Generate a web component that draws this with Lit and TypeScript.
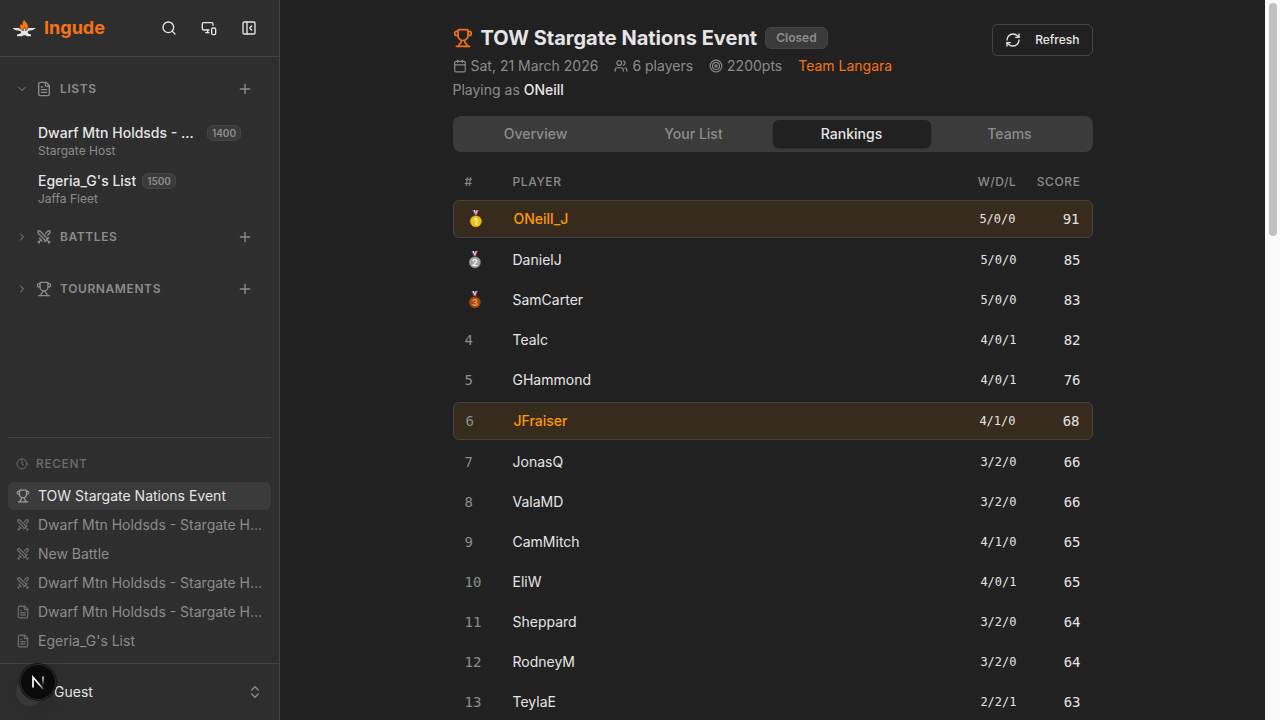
import { LitElement, html, css, svg, nothing } from "lit";
import { customElement, property, state } from "lit/decorators.js";
import { classMap } from "lit/directives/class-map.js";

const ICONS = {
  search: svg`<path d="m21 21-4.34-4.34"/><circle cx="11" cy="11" r="8"/>`,
  devices: svg`<path d="M18 8V6a2 2 0 0 0-2-2H4a2 2 0 0 0-2 2v7a2 2 0 0 0 2 2h8"/><path d="M10 19v-3.96 3.15"/><path d="M7 19h5"/><rect width="6" height="10" x="16" y="12" rx="2"/>`,
  panel: svg`<rect width="18" height="18" x="3" y="3" rx="2"/><path d="M9 3v18"/><path d="m16 15-3-3 3-3"/>`,
  file: svg`<path d="M15 2H6a2 2 0 0 0-2 2v16a2 2 0 0 0 2 2h12a2 2 0 0 0 2-2V7Z"/><path d="M14 2v4a2 2 0 0 0 2 2h4"/><path d="M10 9H8"/><path d="M16 13H8"/><path d="M16 17H8"/>`,
  swords: svg`<path d="M14.5 17.5 3 6V3h3l11.5 11.5"/><path d="m13 19 6-6"/><path d="m16 16 4 4"/><path d="m19 21 2-2"/><path d="M14.5 6.5 18 3h3v3l-3.5 3.5"/><path d="m5 14 4 4"/><path d="m7 17-3 3"/><path d="m3 19 2 2"/>`,
  trophy: svg`<path d="M10 14.66v1.626a2 2 0 0 1-.976 1.696A5 5 0 0 0 7 21.978"/><path d="M14 14.66v1.626a2 2 0 0 0 .976 1.696A5 5 0 0 1 17 21.978"/><path d="M18 9h1.5a1 1 0 0 0 0-5H18"/><path d="M4 22h16"/><path d="M6 9a6 6 0 0 0 12 0V3a1 1 0 0 0-1-1H7a1 1 0 0 0-1 1z"/><path d="M6 9H4.5a1 1 0 0 1 0-5H6"/>`,
  plus: svg`<path d="M5 12h14"/><path d="M12 5v14"/>`,
  down: svg`<path d="m6 9 6 6 6-6"/>`,
  right: svg`<path d="m9 18 6-6-6-6"/>`,
  upDown: svg`<path d="m7 15 5 5 5-5"/><path d="m7 9 5-5 5 5"/>`,
  clock: svg`<circle cx="12" cy="12" r="10"/><path d="M12 6v6l4 2"/>`,
  calendar: svg`<path d="M8 2v4"/><path d="M16 2v4"/><rect width="18" height="18" x="3" y="4" rx="2"/><path d="M3 10h18"/>`,
  users: svg`<path d="M16 21v-2a4 4 0 0 0-4-4H6a4 4 0 0 0-4 4v2"/><path d="M16 3.128a4 4 0 0 1 0 7.744"/><path d="M22 21v-2a4 4 0 0 0-3-3.87"/><circle cx="9" cy="7" r="4"/>`,
  target: svg`<circle cx="12" cy="12" r="10"/><circle cx="12" cy="12" r="6"/><circle cx="12" cy="12" r="2"/>`,
  refresh: svg`<path d="M3 12a9 9 0 0 1 9-9 9.75 9.75 0 0 1 6.74 2.74L21 8"/><path d="M21 3v5h-5"/><path d="M21 12a9 9 0 0 1-9 9 9.75 9.75 0 0 1-6.74-2.74L3 16"/><path d="M8 16H3v5"/>`,
};
type IconName = keyof typeof ICONS;

const icon = (name: IconName, size = 16) => html`<svg
  width=${size} height=${size} viewBox="0 0 24 24" fill="none" stroke="currentColor"
  stroke-width="2" stroke-linecap="round" stroke-linejoin="round" aria-hidden="true"
>${ICONS[name]}</svg>`;

const base = css`
  * { box-sizing: border-box; margin: 0; }
  svg { display: block; flex: none; }
  a { color: inherit; text-decoration: none; }
  button {
    font: inherit; color: inherit; background: none; border: 0; padding: 0;
    display: flex; align-items: center; cursor: pointer;
  }
  ul { list-style: none; padding: 0; }
  .truncate { min-width: 0; overflow: hidden; text-overflow: ellipsis; white-space: nowrap; }
`;

@customElement("side-bar")
export class SideBar extends LitElement {
  static styles = [base, css`
    :host {
      display: flex; flex-direction: column; width: 280px; flex: none;
      background: #2e2e2e; border-right: 1px solid #444; color: #e5e5e5;
    }
    .top {
      display: flex; align-items: center; gap: 8px; height: 57px; flex: none;
      padding: 0 14px 0 12px; border-bottom: 1px solid #444;
    }
    .brand { display: flex; align-items: center; gap: 8px; flex: 1; font-size: 18px; line-height: 28px; font-weight: 700; color: #f97316; }
    .tool { width: 32px; height: 32px; justify-content: center; }
    nav { flex: 1; min-height: 0; overflow: hidden; padding: 8px; }
    .head { display: flex; align-items: center; height: 52px; padding: 8px 10px 12px 8px; color: #8c8c8c; }
    .fold { flex: 1; gap: 8px; font-size: 12px; line-height: 16px; font-weight: 600; letter-spacing: 0.05em; text-transform: uppercase; }
    .add { width: 32px; height: 32px; justify-content: center; }
    .entry { display: block; padding: 6px 30px; }
    .line { display: flex; align-items: center; gap: 6px; font-size: 14px; line-height: 20px; font-weight: 500; }
    .pts {
      flex: none; border: 1px solid #444; border-radius: 6px; background: #3b3b3b; color: #8c8c8c;
      padding: 0 4px; font-size: 10px; line-height: 14px; font-weight: 600;
    }
    .sub { font-size: 12px; line-height: 16px; color: #8c8c8c; }
    .recent { margin: 0 8px; padding: 16px 0 8px; border-top: 1px solid #444; flex: none; }
    .label {
      display: flex; align-items: center; gap: 8px; padding: 0 8px; margin-bottom: 8px;
      font-size: 12px; line-height: 20px; font-weight: 500; letter-spacing: 0.05em; color: #6c6c6c;
    }
    .recents { display: grid; grid-template-columns: minmax(0, 1fr); gap: 1px; }
    .item {
      display: flex; align-items: center; gap: 8px; padding: 4px 8px; border-radius: 6px;
      font-size: 14px; line-height: 20px; color: #8c8c8c;
    }
    .item svg { opacity: 0.7; }
    .item.active { background: #3b3b3b; color: #e5e5e5; }
    .item.active svg { color: #a0a0a0; opacity: 1; }
    .user { height: 57px; flex: none; border-top: 1px solid #444; padding: 0 16px; }
    .user button { width: 100%; height: 56px; gap: 10px; font-size: 14px; line-height: 20px; text-align: left; }
    .avatar { width: 28px; height: 28px; border-radius: 50%; background: #3b3b3b; }
    .name { flex: 1; }
    .user svg { color: #8c8c8c; }
  `];

  @state() private open = true;

  private lists = [
    { name: "Dwarf Mtn Holdsds - Stargate Host", pts: 1400, sub: "Stargate Host" },
    { name: "Egeria_G's List", pts: 1500, sub: "Jaffa Fleet" },
  ];

  private recents: { icon: IconName; name: string }[] = [
    { icon: "trophy", name: "TOW Stargate Nations Event" },
    { icon: "swords", name: "Dwarf Mtn Holdsds - Stargate Host" },
    { icon: "swords", name: "New Battle" },
    { icon: "swords", name: "Dwarf Mtn Holdsds - Stargate Host" },
    { icon: "file", name: "Dwarf Mtn Holdsds - Stargate Host" },
    { icon: "file", name: "Egeria_G's List" },
  ];

  private section(label: string, glyph: IconName, open: boolean, toggle?: () => void) {
    return html`<div class="head">
      <button class="fold" aria-expanded=${open} @click=${toggle ?? nothing}>
        ${icon(open ? "down" : "right", 12)}${icon(glyph)}<span>${label}</span>
      </button>
      <button class="add" aria-label="Add to ${label}">${icon("plus")}</button>
    </div>`;
  }

  render() {
    return html`
      <header class="top">
        <a class="brand" href="#">
          <svg width="24" height="24" viewBox="0 0 24 24" aria-hidden="true">
            <path fill="#e5e5e5" d="M.7 12h6.800v.700h1.500V12h14.700c-.6 1-2.300 1.900-4.700 2.300-2 .3-3.300 1-3.300 1.900 0 .8.700 1.300 1.700 1.700l1.600.5v1.900h-4.200c-.6-1.300-4-1.300-4.600 0H5v-1.700l1.900-.6c1.400-.4 2.300-.9 2.300-1.700 0-.9-1.200-1.400-3-1.700C3.700 14.200 1.500 13.300.7 12z"/>
            <path fill="#f97316" stroke="#2e2e2e" stroke-width=".6" d="M12.400 3.500c.2 2.200 4 3.600 4 7.200 0 1.900-1.300 3.500-3.100 4 .7-1.300.3-2.600-.7-3.300-.1 1.100-1.700 1.700-1.200 3.300-2.100-.5-3.700-1.900-3.700-4 0-1.500.8-2.600 1.600-3.300.1.900.4 1.300 1 1.500-.3-2.100.5-4.300 2.100-5.400z"/>
          </svg>
          Ingude
        </a>
        <button class="tool" aria-label="Search">${icon("search")}</button>
        <button class="tool" aria-label="Devices">${icon("devices")}</button>
        <button class="tool" aria-label="Collapse sidebar">${icon("panel")}</button>
      </header>
      <nav>
        ${this.section("Lists", "file", this.open, () => (this.open = !this.open))}
        ${this.open ? this.lists.map((l) => html`
          <a class="entry" href="#">
            <div class="line"><span class="truncate">${l.name}</span><span class="pts">${l.pts}</span></div>
            <div class="sub">${l.sub}</div>
          </a>`) : nothing}
        ${this.section("Battles", "swords", false)}
        ${this.section("Tournaments", "trophy", false)}
      </nav>
      <section class="recent">
        <div class="label">${icon("clock", 12)}<span>RECENT</span></div>
        <ul class="recents">
          ${this.recents.map((r, i) => html`<li>
            <a href="#" class=${classMap({ item: true, active: i === 0 })}>${icon(r.icon, 14)}<span class="truncate">${r.name}</span></a>
          </li>`)}
        </ul>
      </section>
      <footer class="user">
        <button><span class="avatar"></span><span class="name">Guest</span>${icon("upDown")}</button>
      </footer>`;
  }
}

// Disc fill, disc rim and digit colours for the first three places.
const MEDALS = [
  { fill: "#f5c211", rim: "#d99a00", digit: "#fff6cf" },
  { fill: "#a3a3a3", rim: "#8a8a8a", digit: "#f5f5f5" },
  { fill: "#a84a10", rim: "#8c3c0c", digit: "#f0a060" },
];

const medal = (place: number) => {
  const m = MEDALS[place - 1];
  return html`<svg width="20" height="20" viewBox="0 0 20 20" role="img" aria-label="Place ${place}">
    <path d="M6.200 1h2.600l1.900 5H8.700z" fill="#3f62c4"/>
    <path d="M7.600 1h1.300l1.400 4-.7 1z" fill="#f2f2f2"/>
    <path d="M13.200 1h-2.700L8.900 6h2z" fill="#d0303f"/>
    <path d="M11.600 1h-.9L9.500 5l.5 1z" fill="#f2f2f2"/>
    <circle cx="9.900" cy="12.300" r="5.600" fill=${m.fill} stroke=${m.rim} stroke-width=".5"/>
    <text x="9.900" y="15.600" text-anchor="middle" font-family="Inter, sans-serif" font-size="9" font-weight="700" fill=${m.digit}>${place}</text>
  </svg>`;
};

@customElement("rank-table")
export class RankTable extends LitElement {
  static styles = [base, css`
    :host { display: block; }
    table, thead, tbody { display: grid; gap: 4px; }
    tr { display: grid; grid-template-columns: 48px 1fr 80px 64px; align-items: center; padding: 0 12px; height: 36px; border-radius: 6px; }
    th, td { padding: 0; text-align: left; font-size: 14px; line-height: 20px; }
    thead tr { height: 28px; }
    th { font-size: 12px; line-height: 16px; font-weight: 500; letter-spacing: 0.05em; color: #8c8c8c; }
    th.num, td.num { text-align: right; }
    .rank, td.num { font-family: "DejaVu Sans Mono", monospace; }
    .rank { color: #8c8c8c; }
    td.wdl { font-size: 12px; }
    .mine { height: 38px; background: #372b1e; border: 1px solid #444; }
    .mine .player { color: #fe9a00; font-weight: 500; }
  `];

  @property({ attribute: false }) rows: [string, string, number][] = [];

  render() {
    return html`<table>
      <thead><tr><th>#</th><th>PLAYER</th><th class="num">W/D/L</th><th class="num">SCORE</th></tr></thead>
      <tbody>${this.rows.map(([name, wdl, score], i) => html`
        <tr class=${classMap({ mine: name === "ONeill_J" || name === "JFraiser" })}>
          <td class="rank">${i < 3 ? medal(i + 1) : i + 1}</td>
          <td class="player">${name}</td>
          <td class="num wdl">${wdl}</td>
          <td class="num">${score}</td>
        </tr>`)}
      </tbody>
    </table>`;
  }
}

@customElement("app-root")
export class AppRoot extends LitElement {
  static styles = [base, css`
    :host {
      display: flex; position: relative; height: 100vh; overflow: hidden; background: #212121; color: #e5e5e5;
      font-family: Inter, sans-serif; font-size: 14px; line-height: 20px;
    }
    main { flex: 1; min-width: 0; overflow: hidden; padding: 24px 16px 0; }
    .page { max-width: 640px; margin: 0 auto; display: grid; gap: 16px; }
    .intro { display: flex; justify-content: space-between; align-items: flex-start; }
    .facts { display: grid; gap: 4px; color: #8c8c8c; }
    .title { display: flex; align-items: center; gap: 8px; color: #f97316; }
    h1 { font-size: 20px; line-height: 28px; font-weight: 700; color: #e5e5e5; }
    .status {
      border: 1px solid #444; border-radius: 6px; background: #3b3b3b; color: #8c8c8c;
      padding: 2px 10px; font-size: 12px; line-height: 16px; font-weight: 600;
    }
    .meta { display: flex; gap: 16px; }
    .meta span { display: flex; align-items: center; gap: 4px; }
    .team { color: #f97316; }
    .me { color: #e5e5e5; font-weight: 500; }
    .refresh { height: 32px; gap: 14px; padding: 0 12px; border: 1px solid #444; border-radius: 6px; font-size: 12px; font-weight: 500; }
    .tabs { display: grid; grid-template-columns: repeat(4, 1fr); padding: 4px; border-radius: 8px; background: #3b3b3b; color: #8c8c8c; }
    .tab { height: 28px; justify-content: center; border-radius: 6px; font-weight: 500; }
    .tab.on { background: #212121; color: #e5e5e5; box-shadow: 0 1px 2px #0004; }
    .track { width: 15px; flex: none; background: #fafafa; padding: 3px 3px 0 4px; }
    .thumb { height: 233px; border-radius: 4px; background: #c1c1c1; }
    .dev {
      position: absolute; left: 20px; bottom: 20px; width: 36px; height: 36px; justify-content: center; border-radius: 50%;
      background: #0a0a0a; box-shadow: 0 0 0 1px #171717, inset 0 0 0 1px #2b2b2b, 0 8px 24px -4px #0003;
    }
  `];

  @state() private tab = "Rankings";

  private rows: [string, string, number][] = [
    ["ONeill_J", "5/0/0", 91], ["DanielJ", "5/0/0", 85], ["SamCarter", "5/0/0", 83],
    ["Tealc", "4/0/1", 82], ["GHammond", "4/0/1", 76], ["JFraiser", "4/1/0", 68],
    ["JonasQ", "3/2/0", 66], ["ValaMD", "3/2/0", 66], ["CamMitch", "4/1/0", 65],
    ["EliW", "4/0/1", 65], ["Sheppard", "3/2/0", 64], ["RodneyM", "3/2/0", 64],
    ["TeylaE", "2/2/1", 63],
  ];

  render() {
    return html`
      <side-bar></side-bar>
      <main>
        <div class="page">
          <div class="intro">
            <div class="facts">
              <div class="title">${icon("trophy", 20)}<h1>TOW Stargate Nations Event</h1><span class="status">Closed</span></div>
              <div class="meta">
                <span>${icon("calendar", 14)}Sat, 21 March 2026</span>
                <span>${icon("users", 14)}6 players</span>
                <span>${icon("target", 14)}2200pts</span>
                <a class="team" href="#">Team Langara</a>
              </div>
              <p>Playing as <span class="me">ONeill</span></p>
            </div>
            <button class="refresh">${icon("refresh")}Refresh</button>
          </div>
          <div class="tabs" role="tablist">
            ${["Overview", "Your List", "Rankings", "Teams"].map((t) => html`
              <button role="tab" aria-selected=${t === this.tab} class=${classMap({ tab: true, on: t === this.tab })}
                @click=${() => (this.tab = t)}>${t}</button>`)}
          </div>
          <rank-table .rows=${this.rows}></rank-table>
        </div>
      </main>
      <div class="track" aria-hidden="true"><div class="thumb"></div></div>
      <button class="dev" aria-label="Developer tools">
        <svg width="36" height="36" viewBox="0 0 36 36" fill="none" aria-hidden="true">
          <defs>
            <linearGradient id="diag" x1="20" y1="19" x2="24" y2="25" gradientUnits="userSpaceOnUse"><stop offset="0" stop-color="#fff"/><stop offset="1" stop-color="#fff" stop-opacity="0.2"/></linearGradient>
            <linearGradient id="stem" x1="23" y1="12" x2="23" y2="22" gradientUnits="userSpaceOnUse"><stop offset="0" stop-color="#fff"/><stop offset="1" stop-color="#fff" stop-opacity="0"/></linearGradient>
          </defs>
          <path d="M13 23.500V13.200L23.200 25" stroke="url(#diag)" stroke-width="1.700"/>
          <path d="M23 12.500v9" stroke="url(#stem)" stroke-width="1.600"/>
        </svg>
      </button>`;
  }
}
